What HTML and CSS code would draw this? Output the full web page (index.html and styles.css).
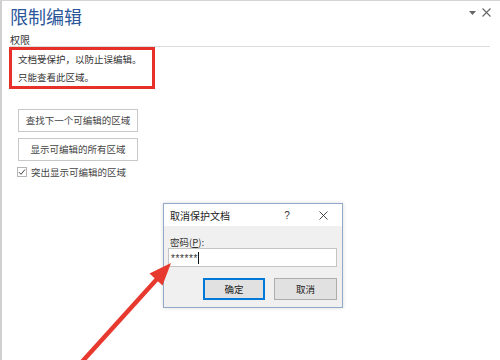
FILE: index.html
```html
<!DOCTYPE html>
<html lang="zh-CN">
<head>
<meta charset="utf-8">
<title>限制编辑</title>
<link rel="stylesheet" href="styles.css">
</head>
<body>
<div class="panel">
  <div class="head">
    <div class="title">限制编辑</div>
    <div class="head-icons">
      <svg class="drop" width="7" height="4" viewBox="0 0 7 4"><path d="M0 0 H7 L3.5 4 Z" fill="#666"/></svg>
      <svg class="close" width="9" height="9" viewBox="0 0 9 9"><path d="M0.5 0.5 L8.5 8.5 M8.5 0.5 L0.5 8.5" stroke="#666" stroke-width="1.1"/></svg>
    </div>
  </div>
  <div class="section">权限</div>
  <div class="notice">
    <div>文档受保护，以防止误编辑。</div>
    <div>只能查看此区域。</div>
  </div>
  <div class="btn">查找下一个可编辑的区域</div>
  <div class="btn btn2">显示可编辑的所有区域</div>
  <div class="check">
    <svg class="box" width="10" height="10" viewBox="0 0 10 10"><rect x="0.5" y="0.5" width="9" height="9" fill="#fff" stroke="#b5b5b5"/><path d="M2 5.2 L4 7.3 L8 2.5" fill="none" stroke="#444" stroke-width="1"/></svg>
    <span>突出显示可编辑的区域</span>
  </div>
</div>

<div class="dialog">
  <div class="dlg-title">
    <span class="dlg-name">取消保护文档</span>
    <span class="dlg-q">?</span>
    <span class="dlg-x"><svg width="9" height="9" viewBox="0 0 9 9"><path d="M0.5 0.5 L8.5 8.5 M8.5 0.5 L0.5 8.5" stroke="#333" stroke-width="0.9"/></svg></span>
  </div>
  <div class="dlg-body">
    <div class="dlg-label">密码(<u>P</u>):</div>
    <div class="dlg-input"><span class="stars">******</span><span class="caret"></span></div>
    <div class="dlg-btns">
      <div class="dbtn ok">确定</div>
      <div class="dbtn">取消</div>
    </div>
  </div>
</div>

<svg class="arrow" width="500" height="360" viewBox="0 0 500 360">
  <line x1="80" y1="364" x2="157" y2="279" stroke="#e8392f" stroke-width="4.5"/>
  <polygon points="171,263 149.5,273.5 162.5,285.5" fill="#e8392f"/>
</svg>
</body>
</html>
```

FILE: styles.css
```css
html, body {
  margin: 0;
  padding: 0;
  background: #fff;
}
body {
  width: 500px;
  height: 360px;
  overflow: hidden;
  position: relative;
  font-family: "Noto Sans CJK SC", "Noto Sans", sans-serif;
  color: #444;
}
.panel {
  box-sizing: border-box;
  height: 360px;
  border-top: 1px solid #d4d4d4;
  border-left: 2px solid #d0d0d0;
  padding: 0 10px 0 8px;
}
.head {
  display: flex;
  justify-content: space-between;
  align-items: flex-start;
}
.title {
  font-size: 18px;
  line-height: 24px;
  padding-top: 3px;
  color: #2b579a;
}
.head-icons {
  display: flex;
  align-items: center;
  gap: 6px;
  margin-top: 7px;
  margin-right: -1px;
}
.section {
  font-size: 10px;
  line-height: 12px;
  margin-top: 6px;
  border-bottom: 1px solid #dcdcdc;
  color: #333;
}
.notice {
  box-sizing: border-box;
  width: 146px;
  margin-left: -1px;
  border: 3px solid #e8302a;
  padding: 0 0 0 6px;
  font-size: 9.5px;
  line-height: 18px;
  color: #333;
}
.btn {
  box-sizing: border-box;
  width: 120px;
  height: 23px;
  margin: 20px 0 0 8px;
  border: 1px solid #c9c9c9;
  background: #fff;
  font-size: 9.5px;
  line-height: 21px;
  text-align: center;
  color: #444;
}
.btn2 {
  margin-top: 6px;
}
.check {
  display: flex;
  align-items: center;
  gap: 4px;
  margin: 5px 0 0 7px;
  height: 12px;
  font-size: 9.5px;
  line-height: 12px;
  color: #444;
}
.dialog {
  position: absolute;
  left: 163px;
  top: 203px;
  width: 180px;
  height: 105px;
  box-sizing: border-box;
  border: 1px solid #93a9c9;
  background: #f0f0f0;
  box-shadow: 0 0 4px rgba(0,0,0,0.15);
  color: #222;
}
.dlg-title {
  display: flex;
  align-items: center;
  height: 22px;
  background: #fff;
  font-size: 10px;
}
.dlg-name {
  flex: 1;
  padding-left: 6px;
}
.dlg-q {
  width: 36px;
  text-align: center;
  font-family: "Liberation Sans", sans-serif;
  font-size: 10px;
  color: #333;
}
.dlg-x {
  width: 36px;
  margin-right: 1px;
  display: flex;
  justify-content: center;
}
.dlg-body {
  padding: 0 5px 0 4px;
}
.dlg-label {
  padding: 10px 0 0 2px;
  font-size: 9.5px;
  line-height: 12px;
  color: #333;
}
.dlg-input {
  box-sizing: border-box;
  height: 19px;
  border: 1px solid #c4c4c4;
  background: #fff;
  display: flex;
  align-items: center;
  padding-left: 2px;
}
.stars {
  font-family: "Liberation Sans", sans-serif;
  font-size: 10px;
  letter-spacing: 0.6px;
  color: #333;
  line-height: 10px;
  padding-top: 3px;
}
.caret {
  width: 1px;
  height: 12px;
  background: #111;
  margin-left: 0px;
}
.dlg-btns {
  display: flex;
  justify-content: flex-end;
  gap: 9px;
  margin-top: 11px;
}
.dbtn {
  box-sizing: border-box;
  width: 63px;
  height: 22px;
  border: 1px solid #adadad;
  background: #e1e1e1;
  font-size: 9.5px;
  line-height: 20px;
  text-align: center;
  color: #222;
}
.dbtn.ok {
  width: 62px;
  border: 2px solid #0078d7;
  line-height: 18px;
}
.arrow {
  position: absolute;
  left: 0;
  top: 0;
  pointer-events: none;
}
```
